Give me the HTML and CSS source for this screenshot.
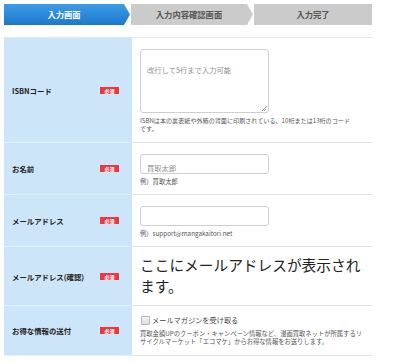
FILE: index.html
```html
<!DOCTYPE html>
<html lang="ja">
<head>
<meta charset="utf-8">
<link rel="stylesheet" href="styles.css">
</head>
<body>
<div class="page">
  <div class="steps">
    <div class="step step-active">入力画面</div>
    <div class="step step-mid">入力内容確認画面</div>
    <div class="step step-last">入力完了</div>
  </div>

  <div class="form">
    <div class="row row-isbn">
      <div class="label"><span class="label-text">ISBNコード</span><span class="req">必須</span></div>
      <div class="value">
        <div class="textarea"><span class="ph">改行して5行まで入力可能</span><span class="grip"></span></div>
        <p class="help help-isbn">ISBNは本の裏表紙や外箱の背面に印刷されている、10桁または13桁のコード<br>です。</p>
      </div>
    </div>
    <div class="row">
      <div class="label"><span class="label-text">お名前</span><span class="req">必須</span></div>
      <div class="value">
        <div class="input"><span class="ph">買取太郎</span></div>
        <p class="help">例）買取太郎</p>
      </div>
    </div>
    <div class="row row-mail">
      <div class="label"><span class="label-text">メールアドレス</span><span class="req">必須</span></div>
      <div class="value">
        <div class="input"></div>
        <p class="help">例）support@mangakaitori.net</p>
      </div>
    </div>
    <div class="row">
      <div class="label"><span class="label-text">メールアドレス(確認)</span><span class="req">必須</span></div>
      <div class="value value-big">
        <p class="big">ここにメールアドレスが表示されます。</p>
      </div>
    </div>
    <div class="row">
      <div class="label"><span class="label-text">お得な情報の送付</span><span class="req">必須</span></div>
      <div class="value value-check">
        <div class="check-line"><span class="checkbox"></span><span class="check-text">メールマガジンを受け取る</span></div>
        <p class="help">買取金額UPのクーポン・キャンペーン情報など、漫画買取ネットが所属するリサイクルマーケット「エコマケ」からお得な情報をお送りします。</p>
      </div>
    </div>
  </div>
</div>
</body>
</html>
```

FILE: styles.css
```css
* { box-sizing: border-box; }
html, body { margin: 0; padding: 0; background: #fff; }
body {
  font-family: "Noto Sans CJK JP", "Noto Sans", sans-serif;
  color: #333;
}
.page {
  width: 372px;
  padding: 4px 0 0 4px;
}
.steps {
  display: flex;
  height: 21px;
}
.step {
  height: 21px;
  line-height: 21px;
  text-align: center;
  font-size: 8.3px;
  font-weight: bold;
  color: #555;
  background: #cbcbcb;
}
.step-active {
  width: 126px;
  margin-right: 1px;
  padding-right: 6px;
  color: #fff;
  background: linear-gradient(#3e9be6, #1c78cc);
  clip-path: polygon(0 0, calc(100% - 6px) 0, 100% 50%, calc(100% - 6px) 100%, 0 100%);
}
.step-mid {
  width: 122px;
  margin-right: 1px;
  padding-right: 6px;
  clip-path: polygon(0 0, calc(100% - 6px) 0, 100% 50%, calc(100% - 6px) 100%, 0 100%);
}
.step-last {
  flex: 1;
}
.form {
  margin-top: 12px;
  border-top: 1px solid #e6e6e6;
}
.row {
  display: grid;
  grid-template-columns: 128px 1fr;
}
.label {
  display: flex;
  align-items: center;
  justify-content: space-between;
  padding: 0 13px 0 8px;
  background: #cde5f8;
  border-bottom: 1px solid #e4f0fb;
}
.label-text {
  font-size: 7.4px;
  font-weight: bold;
  color: #222;
}
.req {
  display: inline-block;
  width: 19px;
  height: 7px;
  line-height: 7px;
  background: #e53a40;
  color: #fff;
  font-size: 5px;
  font-weight: bold;
  text-align: center;
}
.value {
  padding: 11px 8px 8px 8px;
  border-bottom: 1px solid #e3e3e3;
}
.row-isbn .value { padding-bottom: 9px; }
.row-mail .value { padding-bottom: 8px; }
.textarea {
  position: relative;
  width: 129px;
  height: 64px;
  border: 1px solid #cfcfcf;
  border-radius: 3px;
  padding: 4px 6px;
  background: #fff;
}
.grip {
  position: absolute;
  right: 1px;
  bottom: 1px;
  width: 5px;
  height: 5px;
  background: linear-gradient(135deg, transparent 45%, #999 45%, #999 55%, transparent 55%, transparent 70%, #999 70%, #999 80%, transparent 80%);
}
.input {
  width: 129px;
  height: 20px;
  border: 1px solid #cfcfcf;
  border-radius: 3px;
  padding: 0 6px;
  line-height: 18px;
  background: #fff;
}
.ph {
  font-size: 7.3px;
  color: #8f8f8f;
}
.textarea .ph { line-height: 12px; }
.help {
  margin: 4px 0 0;
  font-size: 6.3px;
  line-height: 8px;
  color: #555;
}
.help-isbn {
  font-size: 6.1px;
  white-space: nowrap;
}
.value-big { padding: 7px 8px 9px 8px; }
.big {
  margin: 0;
  font-size: 14.7px;
  line-height: 21px;
  color: #222;
}
.value-check { padding: 8px 8px 9px 8px; }
.check-line {
  display: flex;
  align-items: center;
  height: 12px;
}
.checkbox {
  width: 9px;
  height: 9px;
  margin: 0 2px 0 1px;
  border: 1px solid #b5b5b5;
  border-radius: 1px;
  background: linear-gradient(#f4f4f4, #dedede);
}
.check-text {
  font-size: 7.2px;
  color: #444;
}
.value-check .help { margin-top: 4px; }
```
